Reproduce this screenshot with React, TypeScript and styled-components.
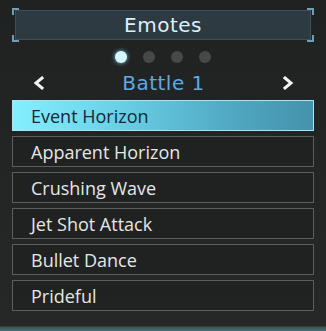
import React from "react";
import styled, { createGlobalStyle } from "styled-components";

const Global = createGlobalStyle`
  html, body { margin: 0; padding: 0; }
  body {
    width: 326px; height: 331px; overflow: hidden;
    background: #222323;
    font-family: "Open Sans", "Lato", sans-serif;
  }
`;

const Panel = styled.div`
  width: 326px;
  height: 331px;
  box-sizing: border-box;
  padding: 8px 12px 0 12px;
  display: flex;
  flex-direction: column;
  background:
    linear-gradient(180deg, transparent 0px, transparent 326px, #3a5358 327px, #4d6c70 331px),
    linear-gradient(180deg, #202121 0%, #242626 60%, #262827 100%);
`;

const TitleFrame = styled.div`
  position: relative;
  height: 34px;
  box-sizing: border-box;
  padding: 2px 3px;
  display: flex;
`;

const Corner = styled.span<{ $v: "top" | "bottom"; $h: "left" | "right" }>`
  position: absolute;
  width: 5px;
  height: 5px;
  ${(p) => p.$v}: 0;
  ${(p) => p.$h}: 0;
  border-${(p) => p.$v}: 2px solid #6f9fb6;
  border-${(p) => p.$h}: 2px solid #6f9fb6;
`;

const TitleBox = styled.div`
  flex: 1;
  background: #2d3a42;
  border: 1px solid #3f4f58;
  display: flex;
  align-items: center;
  justify-content: center;
  color: #dcf0fa;
  font-family: "DejaVu Sans", sans-serif;
  font-size: 20px;
  letter-spacing: 0.5px;
`;

const Dots = styled.div`
  display: flex;
  justify-content: center;
  gap: 16px;
  margin-top: 9px;
  height: 12px;
`;

const Dot = styled.span<{ $on?: boolean }>`
  width: 12px;
  height: 12px;
  border-radius: 50%;
  background: ${(p) => (p.$on ? "#d8f6ff" : "#474848")};
  box-shadow: ${(p) => (p.$on ? "0 0 4px #7fd8f0" : "none")};
`;

const Nav = styled.div`
  display: flex;
  align-items: center;
  justify-content: space-between;
  height: 26px;
  margin-top: 7px;
  padding: 0 20px 0 21px;
`;

const NavTitle = styled.div`
  color: #5fa9e2;
  font-family: "DejaVu Sans", sans-serif;
  font-size: 20px;
  letter-spacing: 0.5px;
`;

const List = styled.div`
  display: flex;
  flex-direction: column;
  gap: 5px;
  margin-top: 4px;
`;

const Row = styled.div<{ $sel?: boolean }>`
  height: 31px;
  box-sizing: border-box;
  border: 1px solid ${(p) => (p.$sel ? "#a8e4f0" : "#5c5d5d")};
  background: ${(p) =>
    p.$sel
      ? "linear-gradient(90deg, #84f0ff 0%, #6ad0e6 35%, #4fa6c0 75%, #4592ac 100%)"
      : "rgba(30,31,31,0.6)"};
  color: ${(p) => (p.$sel ? "#13283a" : "#e6e6e6")};
  display: flex;
  align-items: center;
  padding-left: 18px;
  font-size: 18px;
  font-weight: 500;
`;

const Chevron = ({ dir }: { dir: "left" | "right" }) => (
  <svg width="12" height="14" viewBox="0 0 12 14">
    <polyline
      points={dir === "left" ? "9,2 3,7 9,12" : "3,2 9,7 3,12"}
      fill="none"
      stroke="#f2f2f2"
      strokeWidth="3"
      strokeLinecap="square"
    />
  </svg>
);

const items = [
  "Event Horizon",
  "Apparent Horizon",
  "Crushing Wave",
  "Jet Shot Attack",
  "Bullet Dance",
  "Prideful",
];

export default function App() {
  return (
    <>
      <Global />
      <Panel>
        <TitleFrame>
          <Corner $v="top" $h="left" />
          <Corner $v="top" $h="right" />
          <Corner $v="bottom" $h="left" />
          <Corner $v="bottom" $h="right" />
          <TitleBox>Emotes</TitleBox>
        </TitleFrame>
        <Dots>
          <Dot $on />
          <Dot />
          <Dot />
          <Dot />
        </Dots>
        <Nav>
          <Chevron dir="left" />
          <NavTitle>Battle 1</NavTitle>
          <Chevron dir="right" />
        </Nav>
        <List>
          {items.map((t, i) => (
            <Row key={t} $sel={i === 0}>
              {t}
            </Row>
          ))}
        </List>
      </Panel>
    </>
  );
}
